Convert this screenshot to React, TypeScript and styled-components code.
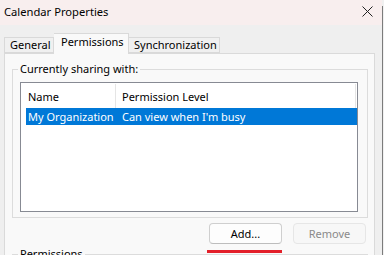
import styled, { createGlobalStyle } from "styled-components";

const Global = createGlobalStyle`
    body {
        margin: 0;
        background: #f0f0f0;
        font-family: "Noto Sans", "Open Sans", sans-serif;
        font-size: 11px;
        color: #000;
    }
`

const Window = styled.div`
    width: 384px;
    height: 255px;
    display: flex;
    overflow: hidden;
`

const Main = styled.div`
    width: 382px;
    display: flex;
    flex-direction: column;
`

const Edge = styled.div`
    width: 1px;
    margin-top: 6px;
    background: #7c7c7c;
`

const TitleBar = styled.div`
    height: 25px;
    flex-shrink: 0;
    background: #f8eeee;
    display: flex;
    align-items: center;
    justify-content: space-between;
    padding: 0 9px 3px 4px;
    box-sizing: border-box;
    font-size: 11.2px;
`

const Body = styled.div`
    flex: 1;
    background: #efefef;
    padding: 8px 0 0 4px;
`

const TabStrip = styled.div`
    display: flex;
    align-items: flex-end;
    height: 20px;
    position: relative;
    z-index: 1;
`

const Tab = styled.div<{ $active?: boolean; $w: number }>`
    box-sizing: border-box;
    width: ${(p) => p.$w}px;
    height: ${(p) => (p.$active ? 21 : 16)}px;
    margin-bottom: ${(p) => (p.$active ? -1 : 0)}px;
    border: 1px solid #d9d9d9;
    border-bottom: ${(p) => (p.$active ? "none" : "1px solid #d9d9d9")};
    background: ${(p) => (p.$active ? "#f9f9f9" : "#f0f0f0")};
    padding: ${(p) => (p.$active ? "0 0 5px 7px" : "0 0 0 5px")};
    display: flex;
    align-items: center;
    line-height: 14px;
    white-space: nowrap;
    & + & {
        border-left: ${(p) => (p.$active ? "1px solid #d9d9d9" : "none")};
    }
`

const Panel = styled.div`
    width: 371px;
    box-sizing: border-box;
    height: 210px;
    border: 1px solid #dadada;
    background: #f9f9f9;
    padding-left: 7px;
    display: flex;
    flex-direction: column;
`

const Group = styled.div`
    width: 356px;
    box-sizing: border-box;
    border: 1px solid #dcdcdc;
    margin-top: 15px;
    display: flex;
    flex-direction: column;
    flex-shrink: 0;
`

const GroupLabel = styled.div`
    margin: -9px 0 0 5px;
    padding: 0 2px;
    width: fit-content;
    line-height: 16px;
    background: #f9f9f9;
`

const ListBox = styled.div`
    width: 338px;
    height: 130px;
    box-sizing: border-box;
    margin: 5px 0 5px 7px;
    border: 1px solid #878a93;
    background: #fff;
    padding-left: 5px;
`

const Row = styled.div<{ $head?: boolean; $sel?: boolean }>`
    display: flex;
    height: ${(p) => (p.$head ? 24 : 17)}px;
    margin-top: ${(p) => (p.$head ? 1 : 0)}px;
    align-items: center;
    background: ${(p) => (p.$sel ? "#0078d7" : "transparent")};
    color: ${(p) => (p.$sel ? "#fff" : "#000")};
`

const Cell = styled.div<{ $w: number; $head?: boolean }>`
    box-sizing: border-box;
    width: ${(p) => p.$w}px;
    height: 100%;
    display: flex;
    align-items: center;
    padding-left: ${(p) => (p.$w > 100 ? 6 : 2)}px;
    border-right: ${(p) => (p.$head ? "1px solid #e5e5e5" : "1px solid transparent")};
    white-space: nowrap;
`

const ButtonRow = styled.div`
    display: flex;
    align-items: flex-start;
    margin: 5px 0 0 197px;
    gap: 11px;
`

const AddWrap = styled.div`
    display: flex;
    flex-direction: column;
`

const Button = styled.div<{ $disabled?: boolean }>`
    box-sizing: border-box;
    width: 73px;
    height: 21px;
    border: 1px solid ${(p) => (p.$disabled ? "#e6e6e6" : "#cfcfcf")};
    border-bottom-color: ${(p) => (p.$disabled ? "#e6e6e6" : "#bdbdbd")};
    border-radius: 4px;
    background: ${(p) => (p.$disabled ? "#f7f7f7" : "#fdfdfd")};
    color: ${(p) => (p.$disabled ? "#8a8a8a" : "#000")};
    display: flex;
    align-items: center;
    justify-content: center;
`

const Highlight = styled.div`
    width: 75px;
    height: 3px;
    margin: 6px 0 0 -2px;
    background: #e3202a;
`

const BottomGroup = styled(Group)`
    margin-top: 1px;
    height: 20px;
`

function App() {
    return (
        <>
            <Global />
            <Window>
                <Main>
                    <TitleBar>
                        <span>Calendar Properties</span>
                        <svg width="11" height="11" viewBox="0 0 11 11">
                            <path d="M0.5 0.5 L10.5 10.5 M10.5 0.5 L0.5 10.5" stroke="#222" strokeWidth="1" />
                        </svg>
                    </TitleBar>
                    <Body>
                        <TabStrip>
                            <Tab $w={50}>General</Tab>
                            <Tab $w={75} $active>Permissions</Tab>
                            <Tab $w={91}>Synchronization</Tab>
                        </TabStrip>
                        <Panel>
                            <Group>
                                <GroupLabel>Currently sharing with:</GroupLabel>
                                <ListBox>
                                    <Row $head>
                                        <Cell $w={90} $head>Name</Cell>
                                        <Cell $w={240} $head>Permission Level</Cell>
                                    </Row>
                                    <Row $sel>
                                        <Cell $w={90}>My Organization</Cell>
                                        <Cell $w={241}>Can view when I'm busy</Cell>
                                    </Row>
                                </ListBox>
                            </Group>
                            <ButtonRow>
                                <AddWrap>
                                    <Button>Add...</Button>
                                    <Highlight />
                                </AddWrap>
                                <Button $disabled>Remove</Button>
                            </ButtonRow>
                            <BottomGroup>
                                <GroupLabel>Permissions</GroupLabel>
                            </BottomGroup>
                        </Panel>
                    </Body>
                </Main>
                <Edge />
            </Window>
        </>
    );
}

export default App;
